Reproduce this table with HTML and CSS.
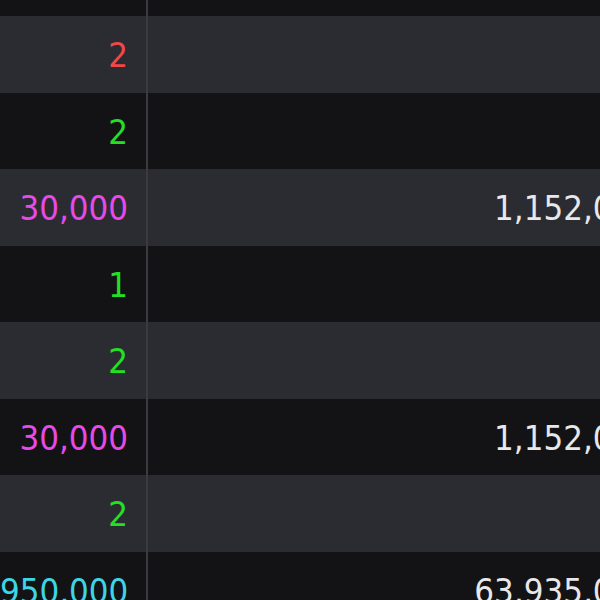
FILE: index.html
```html
<!DOCTYPE html>
<html lang="en">
<head>
    <meta charset="UTF-8">
    <title>Orders</title>
    <link rel="stylesheet" href="styles.css">
</head>
<body>
<div class="grid-view">
    <table class="orders">
        <tr><td class="qty"></td><td class="amount"></td></tr>
        <tr><td class="qty sell">2</td><td class="amount"></td></tr>
        <tr><td class="qty buy">2</td><td class="amount"></td></tr>
        <tr><td class="qty big">30,000</td><td class="amount">1,152,000</td></tr>
        <tr><td class="qty buy">1</td><td class="amount"></td></tr>
        <tr><td class="qty buy">2</td><td class="amount"></td></tr>
        <tr><td class="qty big">30,000</td><td class="amount">1,152,000</td></tr>
        <tr><td class="qty buy">2</td><td class="amount"></td></tr>
        <tr><td class="qty huge">950,000</td><td class="amount">63,935,000</td></tr>
    </table>
</div>
</body>
</html>
```

FILE: styles.css
```css
body {
    margin: 0;
    background-color: #131315; /* dark grid background */
    overflow: hidden;
}

.grid-view {
    width: 600px;
    height: 600px;
    overflow: hidden;
}

.orders {
    width: 670px; /* wider than the view, right side is scrolled off */
    table-layout: fixed;
    border-collapse: collapse;
    margin-top: -60.5px; /* grid is scrolled, top row only partly shown */
    font-family: "DejaVu Sans Condensed", "DejaVu Sans", sans-serif;
    font-stretch: condensed;
    font-size: 34.5px;
    color: #e8e8ea;
}

.orders tr {
    height: 76.5px;
    background-color: #131315;
}

.orders tr:nth-child(even) {
    background-color: #2b2c32; /* zebra rows */
}

.orders td {
    padding: 2px 18px 0 0;
    text-align: right;
    vertical-align: middle;
    white-space: nowrap;
}

.qty {
    width: 128px;
    border-right: 2px solid #3a3a3f;
}

.sell { color: #f04848; }
.buy { color: #22e022; }
.big { color: #e84ae8; }
.huge { color: #3cd6e6; }
```
